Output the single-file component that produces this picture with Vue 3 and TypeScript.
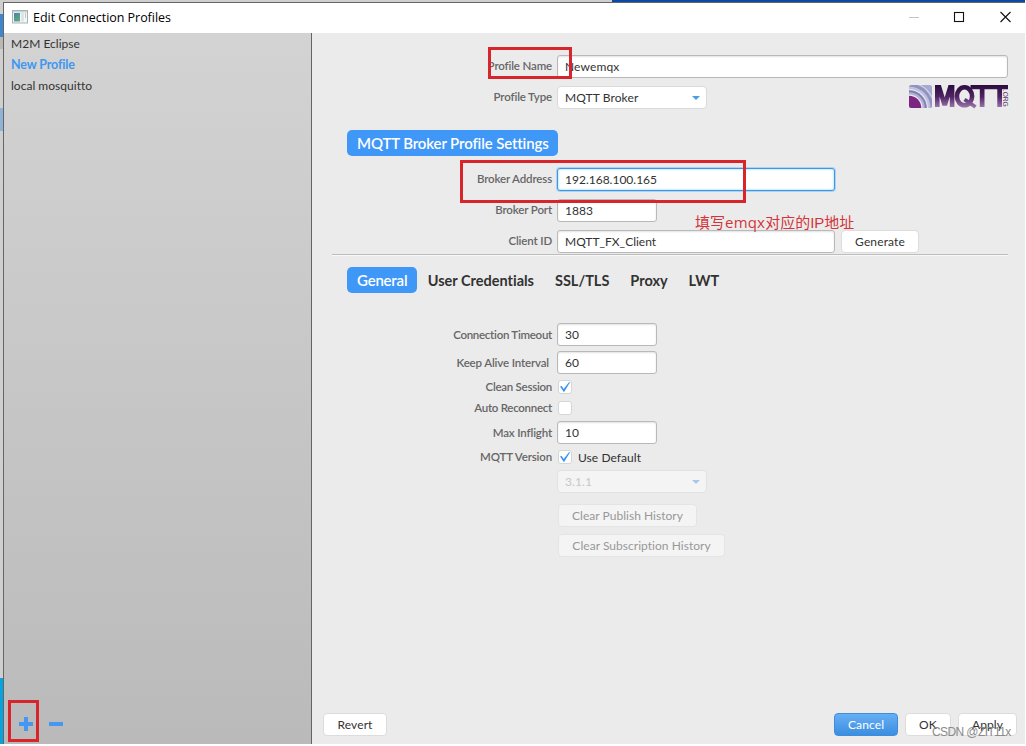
<script setup lang="ts">
import { ref } from 'vue'

interface Profile {
  name: string
  active?: boolean
}

const profiles: Profile[] = [
  { name: 'M2M Eclipse' },
  { name: 'New Profile', active: true },
  { name: 'local mosquitto' },
]
const tabs = ['General', 'User Credentials', 'SSL/TLS', 'Proxy', 'LWT']
const activeTab = ref('General')
const profileName = ref('Newemqx')
const address = ref('192.168.100.165')
const port = ref('1883')
const clientId = ref('MQTT_FX_Client')
const timeout = ref('30')
const keepAlive = ref('60')
const inflight = ref('10')
</script>

<template>
  <div class="desktop">
    <div class="behind"><i class="b1"></i><i class="b2"></i><i class="b3"></i><i class="b4"></i></div>
    <div class="window">
      <header class="titlebar">
        <svg class="app-icon" width="16" height="14" viewBox="0 0 16 14">
          <defs>
            <linearGradient id="ic" x1="0" y1="0" x2="0.6" y2="1">
              <stop offset="0" stop-color="#4b83ad" /><stop offset="1" stop-color="#5fa882" />
            </linearGradient>
          </defs>
          <rect x="0.5" y="0.5" width="15" height="12.5" fill="#f3f6f6" stroke="#a9b1b5" />
          <rect x="1" y="1" width="14" height="1.5" fill="#c9d4da" />
          <rect x="2" y="3" width="6" height="8.5" fill="url(#ic)" />
          <rect x="9" y="3" width="3" height="8.5" fill="#dfe5e4" />
          <rect x="13" y="3" width="1" height="5" fill="#b8d0c0" />
        </svg>
        <span class="title">Edit Connection Profiles</span>
        <svg class="controls" width="103" height="20" viewBox="0 0 103 20" fill="none">
          <path d="M1 10.5h10" stroke="#c4c4c4" />
          <rect x="46.5" y="5.5" width="9" height="9" stroke="#111" stroke-width="1.1" />
          <path d="M92.5 5l10 10M102.5 5l-10 10" stroke="#111" stroke-width="1.1" />
        </svg>
      </header>
      <div class="body">
        <aside class="sidebar">
          <ul class="profiles">
            <li v-for="p in profiles" :key="p.name" :class="{ active: p.active }"><span>{{ p.name }}</span></li>
          </ul>
          <div class="tools">
            <svg width="15" height="14" viewBox="0 0 15 14"><path d="M0 5h5V0h4v5h5v4H9v5H5V9H0z" fill="#4598f2" /></svg>
            <svg width="15" height="14" viewBox="0 0 15 14"><path d="M0 5h14v4H0z" fill="#4598f2" /></svg>
          </div>
        </aside>

        <main class="content">
          <div class="row name-row">
            <label class="high">Profile Name</label>
            <input v-model="profileName" class="field grow" />
          </div>
          <div class="row type-row">
            <label class="high">Profile Type</label>
            <div class="select"><span>MQTT Broker</span><i class="arrow"></i></div>
            <svg class="logo" width="100" height="26" viewBox="0 0 100 26">
              <defs>
                <linearGradient id="lg" gradientUnits="userSpaceOnUse" x1="0" y1="1" x2="0" y2="25">
                  <stop offset="0" stop-color="#2b0c3e" /><stop offset="0.5" stop-color="#4f2565" /><stop offset="1" stop-color="#a982b8" />
                </linearGradient>
                <clipPath id="cp"><rect x="0" y="1" width="23" height="23" rx="2.5" /></clipPath>
              </defs>
              <g clip-path="url(#cp)">
                <rect x="0" y="1" width="23" height="23" fill="#a5a8cf" />
                <circle cx="0" cy="24" r="26" fill="#c9cce4" />
                <circle cx="0" cy="24" r="24.5" fill="#9192c0" />
                <circle cx="0" cy="24" r="21.5" fill="#bfc1de" />
                <circle cx="0" cy="24" r="19" fill="#e6e5f1" />
                <circle cx="0" cy="24" r="17.8" fill="#7d7db2" />
                <circle cx="0" cy="24" r="15.8" fill="#b3b1d4" />
                <circle cx="0" cy="24" r="13.5" fill="#f0eaf4" />
                <circle cx="0" cy="24" r="12.3" fill="#7c267f" />
              </g>
              <g fill="none" stroke="url(#lg)" stroke-width="4.6">
                <path d="M28.3 23V3.3h1.9L35.1 19.5h1.2l4.9-16.2h1.9V23" />
                <ellipse cx="55.5" cy="12.3" rx="7.6" ry="9" />
                <path d="M55.5 15.5l11 7.5" stroke-width="3.8" />
              </g>
              <path d="M61.5 1H99v4.2h-6V23h-4.7V5.2H75.5V23h-4.7V5.2h-9.3z" fill="url(#lg)" />
              <text class="org" transform="translate(93.7 5.8) rotate(90)" textLength="17" lengthAdjust="spacingAndGlyphs">.ORG</text>
            </svg>
          </div>
          <h2 class="pill heading"><span>MQTT Broker Profile Settings</span></h2>
          <div class="row addr-row">
            <label class="high">Broker Address</label>
            <input v-model="address" class="field wide focused" />
          </div>
          <div class="row port-row">
            <label class="high">Broker Port</label>
            <input v-model="port" class="field" />
          </div>
          <div class="row client-row">
            <label class="high">Client ID</label>
            <input v-model="clientId" class="field wide" />
            <button class="btn generate">Generate</button>
          </div>
          <hr />
          <nav class="tabs">
            <a v-for="t in tabs" :key="t" :class="['tab', { pill: t === activeTab }]" @click="activeTab = t"><span>{{ t }}</span></a>
          </nav>
          <div class="row timeout-row">
            <label class="tight">Connection Timeout</label>
            <input v-model="timeout" class="field" />
          </div>
          <div class="row keep-row">
            <label class="keep">Keep Alive Interval</label>
            <input v-model="keepAlive" class="field" />
          </div>
          <div class="row check-row clean-row">
            <label class="tight">Clean Session</label>
            <i class="check"><svg width="14" height="14" viewBox="0 0 14 14"><path d="M2 6.5l1.7-.6 2 3.2L11.1 2l.8.4L6 12.2z" fill="#3b93ef" /></svg></i>
          </div>
          <div class="row check-row auto-row">
            <label class="tight">Auto Reconnect</label>
            <i class="check"></i>
          </div>
          <div class="row inflight-row">
            <label>Max Inflight</label>
            <input v-model="inflight" class="field" />
          </div>
          <div class="row check-row version-row">
            <label>MQTT Version</label>
            <i class="check"><svg width="14" height="14" viewBox="0 0 14 14"><path d="M2 6.5l1.7-.6 2 3.2L11.1 2l.8.4L6 12.2z" fill="#3b93ef" /></svg></i>
            <span class="default">Use Default</span>
          </div>
          <div class="row select-row">
            <label></label>
            <div class="select disabled"><span>3.1.1</span><i class="arrow"></i></div>
          </div>
          <div class="clears">
            <button class="btn off publish" disabled>Clear Publish History</button>
            <button class="btn off subscription" disabled>Clear Subscription History</button>
          </div>
          <footer class="actions">
            <button class="btn revert">Revert</button>
            <button class="btn primary cancel">Cancel</button>
            <button class="btn ok">OK</button>
            <button class="btn apply">Apply</button>
          </footer>
        </main>
      </div>
    </div>

    <div class="mark m-name"></div>
    <div class="mark m-address"></div>
    <div class="mark m-add"></div>
    <div class="note">填写<span>emqx</span>对应的IP地址</div>
    <div class="watermark">CSDN @ZIT11x</div>
  </div>
</template>

<style>
html, body { margin: 0; background: #fff; overflow: hidden; }
</style>

<style scoped>
* { box-sizing: border-box; }
.desktop {
  position: relative;
  width: 1026px;
  height: 746px;
  overflow: hidden;
  background: #fff;
  font-family: Lato, "Liberation Sans", sans-serif;
  font-size: 12px;
  font-variant-ligatures: none;
  color: #323232;
  padding: 2px 1px 2px 3px;
}
.behind { position: absolute; left: 0; top: 0; width: 1025px; height: 744px; background: linear-gradient(90deg, #cfcfcf 612px, #0a4aa4 612px); }
.behind i { position: absolute; left: 0; width: 3px; }
.b1 { top: 14px; height: 23px; background: #3c87ce; }
.b2 { top: 37px; height: 12px; background: #bbb8b2; }
.b3 { top: 108px; height: 23px; background: #8fb3d6; }
.b4 { top: 678px; height: 66px; background: #06a4df; }
.window { position: relative; height: 742px; border-left: 1px solid #666; border-top: 1px solid #666; background: #ebebeb; display: flex; flex-direction: column; }
.titlebar { height: 30px; flex: none; background: #fff; display: flex; align-items: center; padding: 0 14px 0 8px; }
.app-icon { margin-top: -2px; }
.title { font: 12.5px/20px "Open Sans", "Noto Sans", sans-serif; letter-spacing: -.04px; color: #000; margin-left: 5px; margin-top: -1px; flex: 1; white-space: nowrap; }
.controls { flex: none; margin-top: -2px; overflow: visible; }
.body { flex: 1; display: flex; min-height: 0; }
.sidebar { width: 308px; flex: none; border-right: 1px solid #646464; background: linear-gradient(#d3d3d3, #bababa); display: flex; flex-direction: column; justify-content: space-between; }
.profiles { list-style: none; margin: 0; padding: 0 7px; }
.profiles li { height: 21px; line-height: 21px; font-size: 12px; letter-spacing: .02px; }
.profiles li.active { color: #3e97f1; font-weight: bold; font-size: 12.5px; letter-spacing: -.15px; line-height: 22px; }
.tools { display: flex; gap: 15px; padding: 0 0 13px 15px; }
.content { flex: 1; min-width: 0; display: flex; flex-direction: column; padding-top: 22px; }
.row { display: flex; align-items: center; flex: none; height: 23px; padding-right: 17px; }
.row label { width: 240px; margin-right: 5px; text-align: right; font-weight: 600; font-size: 11.5px; letter-spacing: -.15px; color: #666; flex: none; white-space: nowrap; margin-top: -1px; }
.row label.tight { letter-spacing: -.27px; }
.row label.high { margin-top: -3px; }
.row label.keep { padding-right: 3px; }
.field { width: 100px; height: 23px; border: 1px solid #b9b9b9; border-radius: 3px; background: #fff; padding: 0 7px; font: 12px Lato, sans-serif; color: #323232; outline: none; box-shadow: inset 0 1px 2px #e2e2e2; flex: none; }
.grow { flex: 1; letter-spacing: .12px; }
.wide { width: 278px; }
.focused { border: 1px solid #4593d8; box-shadow: 0 0 0 1px #a9d4f8, inset 0 0 2px 1px #c4ecff; }
.select { display: flex; align-items: center; justify-content: space-between; width: 150px; height: 23px; background: #fff; border: 1px solid #dadada; border-radius: 4px; padding: 0 6px 0 7px; letter-spacing: .1px; }
.arrow { width: 0; height: 0; border: 4px solid transparent; border-top: 4.5px solid #4d9be2; border-bottom: 0; }
.select.disabled { background: #f4f4f4; border-color: #e2e2e2; color: #c7c7c7; }
.select.disabled .arrow { border-top-color: #a8c8e8; }
.type-row { margin-top: 8px; }
.logo { margin-left: auto; margin-right: -1px; margin-top: -2px; overflow: visible; }
.org { font: 8px "Liberation Sans", sans-serif; fill: #5b3570; }
.pill { background: #3f97f7; color: #fff; border-radius: 5px; height: 26px; display: flex; align-items: center; padding: 0 10px; }
.heading { margin: 21px 0 0 35px; width: 211px; font-size: 15px; font-weight: 600; letter-spacing: -.13px; white-space: nowrap; flex: none; }
.addr-row { margin-top: 12px; }
.port-row { margin-top: 8px; }
.client-row { margin-top: 8px; }
.btn { height: 23px; border: 1px solid #dcdcdc; border-radius: 4px; background: #fff; font: 12px Lato, sans-serif; letter-spacing: .12px; color: #323232; padding: 0; white-space: nowrap; flex: none; }
.generate { width: 78px; margin-left: 6px; }
hr { margin: 1px 17px 0 20px; border: 0; border-top: 1px solid #bdbdbd; border-bottom: 1px solid #f8f8f8; height: 2px; flex: none; }
.tabs { display: flex; height: 26px; margin: 11px 0 0 35px; flex: none; }
.tab { display: flex; align-items: center; height: 26px; padding: 0 10.2px 0 10.8px; font-size: 14.5px; font-weight: 700; letter-spacing: 0; white-space: nowrap; }
.tab.pill { padding: 0 10px; width: 70px; font-size: 15px; font-weight: 600; letter-spacing: -.2px; }
.timeout-row { margin-top: 30px; }
.keep-row { margin-top: 5px; }
.check-row { height: 14px; }
.check { width: 14px; height: 14px; border: 1px solid #d6d6d6; border-radius: 3px; background: #fff; margin-left: 1px; }
.check svg { display: block; margin: -1px; }
.clean-row { margin-top: 6px; }
.auto-row { margin-top: 7px; }
.inflight-row { margin-top: 6px; }
.version-row { margin-top: 6px; }
.default { margin-left: 6px; letter-spacing: .06px; margin-top: 1px; }
.select-row { margin-top: 6px; }
.clears { display: flex; flex-direction: column; gap: 7px; align-items: flex-start; margin: 11px 0 0 246px; }
.off { background: #f4f4f4; border-color: #e4e4e4; color: #989898; letter-spacing: .03px; }
.publish { width: 139px; }
.subscription { width: 167px; }
.actions { display: flex; margin: auto 8px 8px 11px; }
.revert { width: 64px; margin-right: auto; }
.primary { background: linear-gradient(#66aff5, #3c8ee0); border-color: #3e8ddd; color: #fff; width: 64px; }
.ok { width: 46px; margin-left: 7px; }
.apply { width: 59px; margin-left: 7px; }
.mark { position: absolute; border: 3px solid #d8252c; }
.m-name { left: 488px; top: 47px; width: 84px; height: 32px; }
.m-address { left: 460px; top: 160px; width: 286px; height: 43px; }
.m-add { left: 8px; top: 700px; width: 31px; height: 42px; }
.note { position: absolute; left: 695px; top: 211px; font: 15px/22px "Liberation Sans", "Noto Sans CJK SC", sans-serif; color: #d3343a; white-space: nowrap; }
.note span { font-family: "Open Sans", sans-serif; letter-spacing: .2px; }
.watermark { position: absolute; left: 932px; top: 724px; font: 12px/16px "Liberation Sans", sans-serif; letter-spacing: -.6px; color: #8a8a8a; white-space: nowrap; }
</style>
